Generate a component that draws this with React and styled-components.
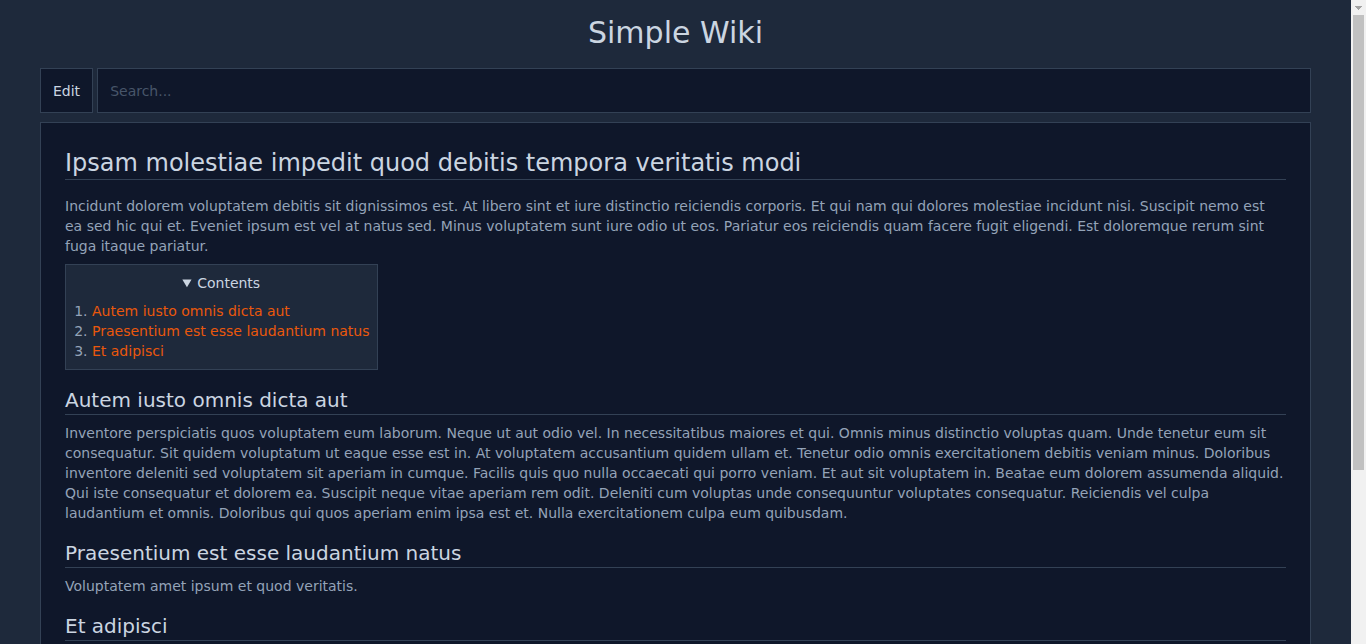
import React from 'react'
import styled, { createGlobalStyle } from 'styled-components'

const Global = createGlobalStyle`
    html {
        height: 100%;
        overflow: hidden;
        background-color: #f1f1f1;
        background-image:
            linear-gradient(to top right, transparent 50%, #a3a3a3 50%),
            linear-gradient(to top left, transparent 50%, #a3a3a3 50%),
            linear-gradient(#c1c1c1, #c1c1c1);
        background-size: 4px 4px, 4px 4px, 11px 455px;
        background-position: right 7px top 6px, right 3px top 6px, right 2px top 15px;
        background-repeat: no-repeat;
    }
    body {
        margin: 0 15px 0 0;
        padding: 0;
        height: 100%;
        overflow: hidden;
        background-color: #1e293b;
        font-family: "DejaVu Sans", Verdana, sans-serif;
        color: #94a3b8;
    }
`;
const Root = styled.div`
    height: 100vh;
    overflow-y: auto;
    box-sizing: border-box;
    padding: 0 40px 40px;
`;
const Header = styled.h1`
    margin: 0;
    padding: 15px 0 17px;
    text-align: center;
    font-size: 30px;
    line-height: 36px;
    font-weight: normal;
    color: #cbd5e1;
`;
const Nav = styled.div`
    display: flex;
    gap: 4px;
    height: 45px;
`;
const EditButton = styled.button`
    background-color: #0f172a;
    border: 1px solid #334155;
    color: #cbd5e1;
    font-family: inherit;
    font-size: 14px;
    padding: 0 12px;
    cursor: pointer;
`;
const Search = styled.input`
    flex: 1;
    background-color: #0f172a;
    border: 1px solid #334155;
    color: #cbd5e1;
    font-family: inherit;
    font-size: 14px;
    padding: 0 12px;
    outline: none;
    &::placeholder {
        color: #475569;
    }
`;
const Article = styled.article`
    margin-top: 9px;
    background-color: #0f172a;
    border: 1px solid #334155;
    padding: 24px;
`;
const Title = styled.h1`
    margin: 0;
    padding: 1px 0 1px;
    border-bottom: 1px solid #334155;
    font-size: 24px;
    line-height: 30px;
    font-weight: normal;
    color: #cbd5e1;
`;
const Heading = styled.h2`
    margin: 18px 0 0;
    padding-bottom: 2px;
    border-bottom: 1px solid #334155;
    font-size: 20px;
    line-height: 24px;
    font-weight: normal;
    color: #cbd5e1;
`;
const Text = styled.p`
    margin: ${p => p.$first ? '16px' : '8px'} 0 0;
    font-size: 14px;
    line-height: 20px;
`;
const Contents = styled.details`
    margin-top: 8px;
    display: inline-block;
    background-color: #1e293b;
    border: 1px solid #334155;
    padding: 8px 7px 8px;
    font-size: 14px;
    line-height: 20px;
`;
const Summary = styled.summary`
    text-align: center;
    color: #cbd5e1;
    cursor: pointer;
    margin-bottom: 8px;
`;
const List = styled.ol`
    margin: 0;
    padding-left: 19px;
`;
const Link = styled.a`
    color: #ea580c;
    text-decoration: none;
`;

const sections = [
    {
        id: "s1",
        title: "Autem iusto omnis dicta aut",
        body: "Inventore perspiciatis quos voluptatem eum laborum. Neque ut aut odio vel. In necessitatibus maiores et qui. Omnis minus distinctio voluptas quam. Unde tenetur eum sit consequatur. Sit quidem voluptatum ut eaque esse est in. At voluptatem accusantium quidem ullam et. Tenetur odio omnis exercitationem debitis veniam minus. Doloribus inventore deleniti sed voluptatem sit aperiam in cumque. Facilis quis quo nulla occaecati qui porro veniam. Et aut sit voluptatem in. Beatae eum dolorem assumenda aliquid. Qui iste consequatur et dolorem ea. Suscipit neque vitae aperiam rem odit. Deleniti cum voluptas unde consequuntur voluptates consequatur. Reiciendis vel culpa laudantium et omnis. Doloribus qui quos aperiam enim ipsa est et. Nulla exercitationem culpa eum quibusdam."
    },
    {
        id: "s2",
        title: "Praesentium est esse laudantium natus",
        body: "Voluptatem amet ipsum et quod veritatis."
    },
    {
        id: "s3",
        title: "Et adipisci",
        body: "Quia et quis ut. Sunt consequatur ut quia nihil voluptatem et. Dolorem aut voluptates repellat enim. Ut et expedita quos iure maxime. Autem velit fugit omnis ut dolores. Quas voluptatem sit ex. Qui praesentium et ipsam molestias rerum ut. Ea modi dolor voluptatibus qui. Aut sed dolores ipsa repellendus rerum. Natus nam et officia nisi est ab nihil. Odit optio voluptatem id. Voluptatem quo omnis nostrum eum. Officia voluptas recusandae et ut. Rerum numquam explicabo ut sint veritatis doloremque. Et in est aut molestias aut."
    }
]

const App = () => {
    return (
        <Root>
            <Global />
            <Header>Simple Wiki</Header>
            <Nav>
                <EditButton>Edit</EditButton>
                <Search placeholder="Search..." />
            </Nav>
            <Article>
                <Title>Ipsam molestiae impedit quod debitis tempora veritatis modi</Title>
                <Text $first>
                    Incidunt dolorem voluptatem debitis sit dignissimos est. At libero sint et iure distinctio reiciendis corporis. Et qui nam qui dolores molestiae incidunt nisi. Suscipit nemo est ea sed hic qui et. Eveniet ipsum est vel at natus sed. Minus voluptatem sunt iure odio ut eos. Pariatur eos reiciendis quam facere fugit eligendi. Est doloremque rerum sint fuga itaque pariatur.
                </Text>
                <Contents open>
                    <Summary>Contents</Summary>
                    <List>
                        {sections.map(s => <li key={s.id}><Link href={"#" + s.id}>{s.title}</Link></li>)}
                    </List>
                </Contents>
                {sections.map(s => (
                    <section key={s.id}>
                        <Heading id={s.id}>{s.title}</Heading>
                        <Text>{s.body}</Text>
                    </section>
                ))}
            </Article>
        </Root>
    )
}

export default App
